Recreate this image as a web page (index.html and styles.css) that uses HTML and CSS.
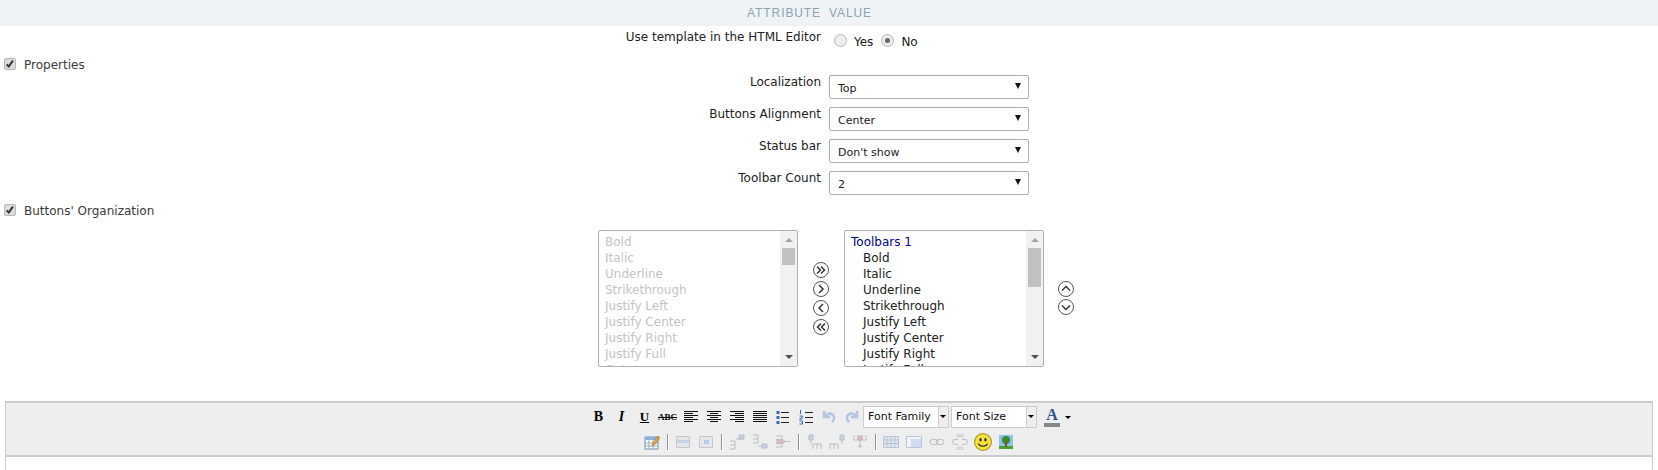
FILE: index.html
```html
<!DOCTYPE html>
<html lang="en">
<head>
  <meta charset="UTF-8">
  <title>Attribute Value</title>
  <link rel="stylesheet" href="styles.css">
</head>
<body>
  <!-- Header -->
  <div class="table-head"><span class="head-attr">ATTRIBUTE</span><span>VALUE</span></div>

  <div class="row row-template">
    <label class="row-label">Use template in the HTML Editor</label>
    <div class="radios">
      <span class="radio"></span><span class="radio-text">Yes</span>
      <span class="radio checked"></span><span class="radio-text">No</span>
    </div>
  </div>

  <!-- Properties -->
  <div class="section section-props">
    <span class="check"><svg viewBox="0 0 12 12"><path d="M2 6.500l2.500 2.500 5-7" fill="none" stroke="#333" stroke-width="2.400"/></svg></span>
    <span>Properties</span>
  </div>

  <div class="row row-select">
    <label class="row-label">Localization</label>
    <div class="select"><span>Top</span><span class="select-arrow"></span></div>
  </div>
  <div class="row row-select">
    <label class="row-label">Buttons Alignment</label>
    <div class="select"><span>Center</span><span class="select-arrow"></span></div>
  </div>
  <div class="row row-select">
    <label class="row-label">Status bar</label>
    <div class="select"><span>Don't show</span><span class="select-arrow"></span></div>
  </div>
  <div class="row row-select">
    <label class="row-label">Toolbar Count</label>
    <div class="select"><span>2</span><span class="select-arrow"></span></div>
  </div>

  <!-- Buttons' Organization -->
  <div class="section section-org">
    <span class="check"><svg viewBox="0 0 12 12"><path d="M2 6.500l2.500 2.500 5-7" fill="none" stroke="#333" stroke-width="2.400"/></svg></span>
    <span>Buttons' Organization</span>
  </div>

  <div class="organizer">
    <div class="listbox listbox-off">
      <div class="list-items">
        <div>Bold</div>
        <div>Italic</div>
        <div>Underline</div>
        <div>Strikethrough</div>
        <div>Justify Left</div>
        <div>Justify Center</div>
        <div>Justify Right</div>
        <div>Justify Full</div>
        <div>Cut</div>
      </div>
      <div class="scrollbar">
        <span class="scroll-up"></span>
        <span class="thumb thumb-short"></span>
        <span class="scroll-down"></span>
      </div>
    </div>

    <div class="move-btns">
      <svg class="round" viewBox="0 0 18 18"><circle cx="9" cy="9" r="7.500"/><path class="chev" d="M5 5.500l3.500 3.500-3.500 3.500M9 5.500l3.500 3.500-3.500 3.500"/></svg>
      <svg class="round" viewBox="0 0 18 18"><circle cx="9" cy="9" r="7.500"/><path class="chev" d="M7 5l4 4-4 4"/></svg>
      <svg class="round" viewBox="0 0 18 18"><circle cx="9" cy="9" r="7.500"/><path class="chev" d="M11 5l-4 4 4 4"/></svg>
      <svg class="round" viewBox="0 0 18 18"><circle cx="9" cy="9" r="7.500"/><path class="chev" d="M9 5.500l-3.500 3.500 3.500 3.500M13 5.500l-3.500 3.500 3.500 3.500"/></svg>
    </div>

    <div class="listbox">
      <div class="list-items">
        <div class="list-group">Toolbars 1</div>
        <div class="list-child">Bold</div>
        <div class="list-child">Italic</div>
        <div class="list-child">Underline</div>
        <div class="list-child">Strikethrough</div>
        <div class="list-child">Justify Left</div>
        <div class="list-child">Justify Center</div>
        <div class="list-child">Justify Right</div>
        <div class="list-child">Justify Full</div>
      </div>
      <div class="scrollbar">
        <span class="scroll-up"></span>
        <span class="thumb thumb-long"></span>
        <span class="scroll-down"></span>
      </div>
    </div>

    <div class="order-btns">
      <svg class="round" viewBox="0 0 18 18"><circle cx="9" cy="9" r="7.500"/><path class="chev" d="M5 10.500l4-4 4 4"/></svg>
      <svg class="round" viewBox="0 0 18 18"><circle cx="9" cy="9" r="7.500"/><path class="chev" d="M5 7.500l4 4 4-4"/></svg>
    </div>
  </div>

  <!-- Editor -->
  <div class="editor">
    <div class="toolbar">
      <div class="tool-row">
        <span class="tool tool-b">B</span>
        <span class="tool tool-i">I</span>
        <span class="tool tool-u">U</span>
        <span class="tool tool-abc">ABC</span>
        <span class="tool"><svg class="ic lines" viewBox="0 0 16 16"><path d="M1 2.500h14M1 4.500h9M1 6.500h14M1 8.500h9M1 10.500h14M1 12.500h9"/></svg></span>
        <span class="tool"><svg class="ic lines" viewBox="0 0 16 16"><path d="M1 2.500h14M4 4.500h8M1 6.500h14M4 8.500h8M1 10.500h14M4 12.500h8"/></svg></span>
        <span class="tool"><svg class="ic lines" viewBox="0 0 16 16"><path d="M1 2.500h14M6 4.500h9M1 6.500h14M6 8.500h9M1 10.500h14M6 12.500h9"/></svg></span>
        <span class="tool"><svg class="ic lines" viewBox="0 0 16 16"><path d="M1 2.500h14M1 4.500h14M1 6.500h14M1 8.500h14M1 10.500h14M1 12.500h14"/></svg></span>
        <span class="tool"><svg class="ic" viewBox="0 0 16 16"><path d="M6 3.500h8M6 8.500h8M6 13.500h8" stroke="#222" fill="none"/><path d="M1.500 2h3v3h-3zM1.500 7h3v3h-3zM1.500 12h3v3h-3z" fill="#3a69b0"/></svg></span>
        <span class="tool"><svg class="ic" viewBox="0 0 16 16"><path d="M7 3.500h8M7 8.500h8M7 13.500h8" stroke="#222" fill="none"/><path d="M2.500 1v4M1.500 7h3v1l-3 2h3M1.500 12h3v3h-3" stroke="#3a69b0" fill="none"/></svg></span>
        <span class="tool"><svg class="ic" viewBox="0 0 16 16"><path d="M3 2v6h6M3.500 7.500c2-3 6-4 8.500-1.500 2 2 1 5-1 7" fill="none" stroke="#b4c6e2" stroke-width="2.600"/></svg></span>
        <span class="tool"><svg class="ic" viewBox="0 0 16 16"><path d="M13 2v6h-6M12.500 7.500c-2-3-6-4-8.500-1.500-2 2-1 5 1 7" fill="none" stroke="#b4c6e2" stroke-width="2.600"/></svg></span>
        <div class="tool-select"><span class="tool-select-text">Font Family</span><span class="tool-select-btn"></span></div>
        <div class="tool-select"><span class="tool-select-text">Font Size</span><span class="tool-select-btn"></span></div>
        <span class="tool tool-color"><span class="color-a">A</span><span class="color-bar"></span></span>
        <span class="tool-caret"></span>
      </div>
      <div class="tool-row">
        <span class="tool"><svg class="ic" viewBox="0 0 16 16"><path d="M1 3h13v12H1z" fill="#fff" stroke="#6d8cb8"/><path d="M1 3h13v3H1z" fill="#8fb0dc"/><path d="M1 9h13M1 12h13M5 6v9M9 6v9" stroke="#9ab" fill="none"/><path d="M9 9l5-7 2 1.500-5 7-3 1z" fill="#e8a23a" stroke="#8a5a20" stroke-width=".5"/></svg></span>
        <span class="tool-sep"></span>
        <span class="tool"><svg class="ic" viewBox="0 0 16 16"><path d="M1.500 2.500h13v11h-13z" fill="#e4e6ea" stroke="#c4c8cf"/><path d="M2 6h12v3H2z" fill="#c5d3e8"/></svg></span>
        <span class="tool"><svg class="ic" viewBox="0 0 16 16"><path d="M1.500 2.500h13v11h-13z" fill="#e4e6ea" stroke="#c4c8cf"/><path d="M6 6h5v4H6z" fill="#b9cbe4"/></svg></span>
        <span class="tool-sep"></span>
        <span class="tool"><svg class="ic off" viewBox="0 0 16 16"><path d="M1 7h5v8H1M1 11h5"/><path d="M15 5h-8"/><path d="M10 1h5v4h-5z" fill="#c5d5ea"/></svg></span>
        <span class="tool"><svg class="ic off" viewBox="0 0 16 16"><path d="M1 1h5v8H1M1 5h5"/><path d="M6 12h4"/><path d="M10 10h5v4h-5z" fill="#c5d5ea"/></svg></span>
        <span class="tool"><svg class="ic off" viewBox="0 0 16 16"><path d="M1 2h6v11H1M1 5.500h6M1 9.500h6"/><path d="M2 6h7v3H2z" fill="#f0b8b8"/><path d="M9 7.500h6"/></svg></span>
        <span class="tool-sep"></span>
        <span class="tool"><svg class="ic off" viewBox="0 0 16 16"><path d="M3 1h4v5H3z" fill="#c5d5ea"/><path d="M5 6v4M7 15V10h8v5M11 10v5"/></svg></span>
        <span class="tool"><svg class="ic off" viewBox="0 0 16 16"><path d="M11 1h4v5h-4z" fill="#c5d5ea"/><path d="M13 6v4M1 15v-5h8v5M5 10v5"/></svg></span>
        <span class="tool"><svg class="ic off" viewBox="0 0 16 16"><path d="M2 1v5h12V1M6 1v5M10 1v5"/><path d="M6 2h4v4H6z" fill="#f0b8b8"/><path d="M8 6v8M6 12h4"/></svg></span>
        <span class="tool-sep"></span>
        <span class="tool"><svg class="ic" viewBox="0 0 16 16"><path d="M.500 2.500h15v11H.500z" fill="#dfe6f0" stroke="#b9c4d6"/><path d="M4 3v10M8 3v10M12 3v10M1 6h14M1 9.500h14" stroke="#b9c4d6" fill="none"/></svg></span>
        <span class="tool"><svg class="ic" viewBox="0 0 16 16"><path d="M.500 2.500h15v11H.500z" fill="#cfdcef" stroke="#b9c4d6"/><path d="M1 3h14v2H5v8H1z" fill="#f2f4f7"/></svg></span>
        <span class="tool"><svg class="ic off" viewBox="0 0 16 16"><rect x="1" y="5.500" width="8" height="5" rx="2.500"/><rect x="7" y="5.500" width="8" height="5" rx="2.500"/></svg></span>
        <span class="tool"><svg class="ic off" viewBox="0 0 16 16"><path d="M6 5.500H3a2.500 2.500 0 0 0 0 5h3M10 5.500h3a2.500 2.500 0 0 1 0 5h-3M5 0l1.500 3.500M11 0L9.500 3.500M5 16l1.500-3.500M11 16l-1.500-3.500M8 0v3M8 13v3"/></svg></span>
        <span class="tool"><svg class="ic-lg" viewBox="0 0 16 16"><circle cx="8" cy="8" r="7.500" fill="#f6e23c" stroke="#a89a20"/><ellipse cx="5.800" cy="6" rx="1" ry="1.500" fill="#222"/><ellipse cx="10.200" cy="6" rx="1" ry="1.500" fill="#222"/><path d="M4 9.500c1 3 7 3 8 0" fill="none" stroke="#222"/></svg></span>
        <span class="tool"><svg class="ic" viewBox="0 0 16 16"><path d="M1 1h14v14H1z" fill="#8cc4ec"/><path d="M1 12h14v3H1z" fill="#4ca32a"/><circle cx="8" cy="6" r="4" fill="#3f8a2a"/><path d="M7 8h2v5H7z" fill="#7a5020"/></svg></span>
      </div>
    </div>
    <div class="editor-body"></div>
  </div>
</body>
</html>
```
FILE: styles.css
```css
/* ===== Base ===== */
* {
  margin: 0;
  padding: 0;
  box-sizing: border-box;
}
html, body {
  height: 100%;
  overflow: hidden;
}
body {
  background: #fff;
  color: #222;
  font-family: "DejaVu Sans", Tahoma, sans-serif;
  font-size: 12px;
}

/* ===== Header ===== */
.table-head {
  height: 26px;
  background: #eff3f6;
  color: #8aa4b5;
  font-family: "Liberation Sans", Arial, sans-serif;
  font-size: 12px;
  letter-spacing: 0.9px;
  display: flex;
  align-items: center;
  gap: 8px;
}
.head-attr {
  width: 821px;
  flex-shrink: 0;
  text-align: right;
}

/* ===== Rows ===== */
.row {
  display: flex;
  gap: 8px;
}
.row-label {
  width: 821px;
  flex-shrink: 0;
  text-align: right;
}
.row-template {
  height: 24px;
  margin-top: 4px;
}
.row-select {
  height: 24px;
  margin-bottom: 8px;
}
.radios {
  display: flex;
  align-items: center;
  height: 20px;
  padding-left: 5px;
}
.radio {
  width: 13px;
  height: 13px;
  border-radius: 50%;
  border: 1px solid #b4b4b4;
  background: #ececec;
  margin-right: 7px;
  position: relative;
}
.radio.checked::after {
  content: "";
  position: absolute;
  left: 3px;
  top: 3px;
  width: 5px;
  height: 5px;
  border-radius: 50%;
  background: #666;
}
.radio-text {
  margin-right: 8px;
  padding-top: 4px;
}

/* ===== Sections ===== */
.section {
  display: flex;
  align-items: center;
  gap: 8px;
  padding-left: 4px;
  color: #3a3a3a;
}
.section-props {
  height: 20px;
  margin-top: 1px;
}
.section-org {
  height: 20px;
  margin-top: -2px;
  margin-bottom: 9px;
}
.check {
  width: 12px;
  height: 12px;
  border: 1px solid #b8b8b8;
  border-radius: 2px;
  background: #dcdcdc;
  display: block;
  margin-top: -3px;
}
.check svg {
  display: block;
  width: 10px;
  height: 10px;
}

/* ===== Selects ===== */
.select {
  width: 200px;
  height: 24px;
  border: 1px solid #a9b0bb;
  border-radius: 2px;
  padding: 2px 7px 0 8px;
  display: flex;
  align-items: center;
  justify-content: space-between;
  font-size: 11px;
}
.select-arrow {
  width: 0;
  height: 0;
  border-left: 3px solid transparent;
  border-right: 3px solid transparent;
  border-top: 6px solid #111;
  margin-top: -4px;
}

/* ===== Organizer lists ===== */
.organizer {
  display: flex;
  height: 137px;
  padding-left: 598px;
}
.listbox {
  width: 200px;
  height: 137px;
  border: 1px solid #a9b0bb;
  border-radius: 2px;
  display: flex;
  overflow: hidden;
}
.list-items {
  flex: 1;
  padding: 3px 0 0 6px;
  line-height: 16px;
  overflow: hidden;
}
.listbox-off .list-items {
  color: #c4c4c4;
}
.list-group {
  color: #00008b;
}
.list-child {
  padding-left: 12px;
}
.scrollbar {
  width: 17px;
  background: #f1f1f1;
  display: flex;
  flex-direction: column;
  align-items: center;
  position: relative;
}
.scroll-up,
.scroll-down {
  position: absolute;
  width: 0;
  height: 0;
  border-left: 4px solid transparent;
  border-right: 4px solid transparent;
}
.scroll-up {
  top: 7px;
  border-bottom: 4px solid #a3a3a3;
}
.scroll-down {
  bottom: 7px;
  border-top: 4px solid #505050;
}
.thumb {
  width: 13px;
  margin-top: 17px;
  background: #c1c1c1;
}
.thumb-short {
  height: 17px;
}
.thumb-long {
  height: 39px;
}
.move-btns,
.order-btns {
  display: flex;
  flex-direction: column;
  align-items: center;
}
.move-btns {
  width: 46px;
  padding-top: 31px;
  gap: 1px;
}
.order-btns {
  width: 44px;
  padding-top: 50px;
}
.round {
  width: 18px;
  height: 18px;
  display: block;
  fill: none;
  stroke: #555;
  stroke-width: 1;
}
.chev {
  stroke: #333;
  stroke-width: 1.5;
}

/* ===== Editor ===== */
.editor {
  margin: 34px 5px 0;
  border: 1px solid #ccc;
  border-top-width: 2px;
  height: 80px;
}
.toolbar {
  background: #eee;
  height: 54px;
  border-bottom: 2px solid #ccc;
  padding-top: 1px;
}
.tool-row {
  height: 26px;
  display: flex;
  justify-content: center;
  align-items: center;
}
.tool-row + .tool-row {
  height: 24px;
}
.tool {
  width: 23px;
  height: 24px;
  flex-shrink: 0;
  display: flex;
  align-items: center;
  justify-content: center;
  color: #000;
}
.tool-b {
  font: bold 14px "Liberation Serif", serif;
}
.tool-i {
  font: italic bold 14px "Liberation Serif", serif;
}
.tool-u {
  font: bold 13px "Liberation Serif", serif;
  text-decoration: underline;
}
.tool-abc {
  font: bold 9px "Liberation Serif", serif;
  text-decoration: line-through;
}
.ic {
  width: 16px;
  height: 16px;
  display: block;
}
.ic-lg {
  width: 18px;
  height: 18px;
  display: block;
}
.lines {
  stroke: #111;
  fill: none;
}
.off {
  stroke: #b9bdc2;
  fill: none;
}
.tool-sep {
  width: 2px;
  height: 16px;
  margin: 0 3px;
  background: #8f9398;
  border-right: 1px solid #fff;
  flex-shrink: 0;
}
.tool-select {
  width: 86px;
  height: 22px;
  margin-right: 2px;
  border: 1px solid #ccc;
  background: #fff;
  display: flex;
  font-size: 11px;
  align-items: stretch;
  flex-shrink: 0;
}
.tool-select-text {
  flex: 1;
  padding: 0 0 0 4px;
  color: #111;
  line-height: 20px;
}
.tool-select-btn {
  width: 10px;
  background: #eee;
  border-left: 1px solid #ccc;
  position: relative;
}
.tool-select-btn::after {
  content: "";
  position: absolute;
  left: 1px;
  top: 8px;
  border-left: 3px solid transparent;
  border-right: 3px solid transparent;
  border-top: 3px solid #000;
}
.tool-color {
  flex-direction: column;
  width: 24px;
  margin-left: 1px;
}
.color-a {
  font: bold 16px/14px "Liberation Serif", serif;
  color: #33508c;
}
.color-bar {
  width: 16px;
  height: 4px;
  background: #888;
  margin-top: 1px;
}
.tool-caret {
  width: 0;
  height: 0;
  margin-left: 1px;
  border-left: 3px solid transparent;
  border-right: 3px solid transparent;
  border-top: 3px solid #000;
}
.editor-body {
  height: 22px;
  background: #fff;
}
```
